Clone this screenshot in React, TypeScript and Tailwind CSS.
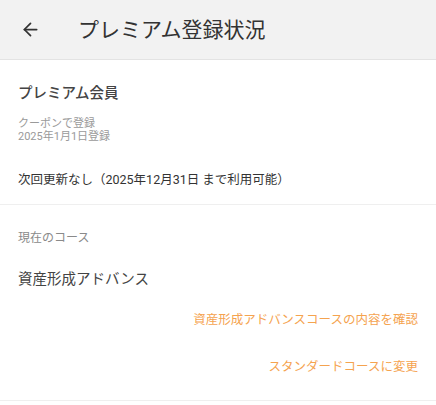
import { ArrowLeft } from "lucide-react";

const font = { fontFamily: "Roboto, 'Noto Sans CJK JP', sans-serif" };

export default function App() {
  return (
    <div className="min-h-screen bg-white" style={font}>
      {/* header */}
      <div className="flex h-[60px] items-center border-b border-[#e3e3e3] bg-[#f2f2f2]">
        <button className="ml-[18px] flex h-6 w-6 items-center justify-center text-[#333]">
          <ArrowLeft className="h-[21px] w-[21px]" strokeWidth={2} />
        </button>
        <h1 className="ml-[36px] text-[21px] leading-7 text-[#333]">プレミアム登録状況</h1>
      </div>

      {/* membership */}
      <div className="border-b border-[#efefef] px-[18px] pt-6 pb-[15px]">
        <p className="text-[14.5px] leading-5 font-medium text-[#444]">プレミアム会員</p>
        <div className="mt-[13px] text-[11px] leading-[13px] text-[#9a9a9a]">
          <p>クーポンで登録</p>
          <p>2025年1月1日登録</p>
        </div>
        <p className="mt-[28px] text-[12.5px] leading-[18px] text-[#333]">
          次回更新なし（2025年12月31日 まで利用可能）
        </p>
      </div>

      {/* course */}
      <div className="border-b border-[#efefef] px-[18px] pt-[25px] pb-6">
        <p className="text-[12px] leading-4 text-[#8a8a8a]">現在のコース</p>
        <p className="mt-6 text-[14.5px] leading-5 text-[#444]">資産形成アドバンス</p>
        <div className="mt-[21px] flex flex-col items-end text-[12.5px] leading-[18px] text-[#f5a34f]">
          <button>資産形成アドバンスコースの内容を確認</button>
          <button className="mt-[29px]">スタンダードコースに変更</button>
        </div>
      </div>
    </div>
  );
}
